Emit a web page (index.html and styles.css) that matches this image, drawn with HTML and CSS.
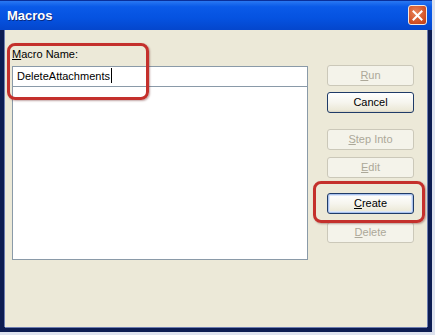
FILE: index.html
```html
<!DOCTYPE html>
<html lang="en">
<head>
    <meta charset="UTF-8">
    <title>Macros</title>
    <link rel="stylesheet" href="styles.css">
</head>
<body>
    <div class="window">
        <div class="titlebar">
            <span class="title">Macros</span>
            <span class="close">
                <svg width="11" height="11" viewBox="0 0 11 11">
                    <path d="M1.5 1.5 L9.5 9.5 M9.5 1.5 L1.5 9.5" stroke="#fff" stroke-width="2" stroke-linecap="square"/>
                </svg>
            </span>
        </div>
        <div class="content">
            <!-- name + list -->
            <div class="left">
                <label class="name-label"><u>M</u>acro Name:</label>
                <div class="textbox">DeleteAttachments<span class="caret"></span></div>
                <div class="listbox"></div>
            </div>
            <!-- buttons -->
            <div class="buttons">
                <div class="btn disabled run"><u>R</u>un</div>
                <div class="btn cancel">Cancel</div>
                <div class="btn disabled step"><u>S</u>tep Into</div>
                <div class="btn disabled edit"><u>E</u>dit</div>
                <div class="btn focused create"><u>C</u>reate</div>
                <div class="btn disabled delete"><u>D</u>elete</div>
            </div>
        </div>
        <div class="callout callout-name"></div>
        <div class="callout callout-create"></div>
    </div>
</body>
</html>
```

FILE: styles.css
```css
body {
    margin: 0;
    background-color: #dde2ee;
    font-family: "Liberation Sans", Arial, sans-serif;
    font-size: 11px;
}
.window {
    position: relative;
    width: 432px;
    height: 332px;
    display: flex;
    flex-direction: column;
    background-color: #0c1c52;
}
.titlebar {
    height: 30px;
    display: flex;
    align-items: center;
    justify-content: space-between;
    padding: 0 5px 0 7px;
    background: linear-gradient(#2a78f2 0%, #0a5ae8 20%, #0552e0 60%, #0446cc 100%);
    border-top: 1px solid #0a2f9a;
    box-sizing: border-box;
}
.title {
    color: #fff;
    font-weight: bold;
    font-size: 13px;
    text-shadow: 1px 1px 0 #0a2a80;
}
.close {
    width: 19px;
    height: 20px;
    display: flex;
    align-items: center;
    justify-content: center;
    border: 1px solid #f4e8e0;
    border-radius: 3px;
    background: radial-gradient(circle at 40% 35%, #e8845a, #cf4d22 70%, #b83a16);
    box-sizing: border-box;
    margin-top: -1px;
}
.content {
    flex: 1;
    display: flex;
    gap: 19px;
    padding: 17px 0 0 7px;
    margin: 0 5px 5px 5px;
    background-color: #ece9d8;
    box-shadow: -1px 0 0 #6d7db0, 1px 0 0 #6d7db0, 0 1px 0 #6d7db0;
}
.left {
    width: 296px;
}
.name-label {
    display: block;
    height: 14px;
    line-height: 14px;
    margin-bottom: 5px;
    color: #000;
}
.textbox {
    height: 21px;
    line-height: 19px;
    border: 1px solid #8a9aa8;
    background-color: #fff;
    padding-left: 4px;
    box-sizing: border-box;
    color: #000;
}
.caret {
    display: inline-block;
    width: 1px;
    height: 15px;
    background-color: #000;
    vertical-align: -3px;
    margin-left: 1px;
}
.listbox {
    height: 173px;
    border: 1px solid #8a9aa8;
    border-top: none;
    background-color: #fff;
    box-sizing: border-box;
}
.buttons {
    width: 87px;
    margin-top: 18px;
    display: flex;
    flex-direction: column;
}
.btn {
    height: 21px;
    line-height: 19px;
    text-align: center;
    border-radius: 3px;
    box-sizing: border-box;
}
.btn.disabled {
    border: 1px solid #cbc8b9;
    background-color: #f4f3ea;
    color: #aca899;
}
.btn.cancel, .btn.create {
    border: 1px solid #1f3b68;
    background: linear-gradient(#ffffff, #f6f5ee 50%, #ece9d8 90%, #d8d3c4);
    color: #000;
}
.btn.create {
    box-shadow: inset 0 0 0 1px #a9c2ee, inset 0 0 0 2px #dce6f8;
}
.cancel { margin-top: 6px; }
.step { margin-top: 16px; }
.edit { margin-top: 7px; }
.create { margin-top: 15px; }
.delete { margin-top: 8px; }
.callout {
    position: absolute;
    border: 3px solid #c4302c;
    border-radius: 8px;
    box-shadow: 1px 1px 2px rgba(80, 0, 0, 0.35);
    box-sizing: border-box;
}
.callout-name {
    left: 7px;
    top: 43px;
    width: 142px;
    height: 57px;
}
.callout-create {
    left: 313px;
    top: 181px;
    width: 112px;
    height: 42px;
}
```
